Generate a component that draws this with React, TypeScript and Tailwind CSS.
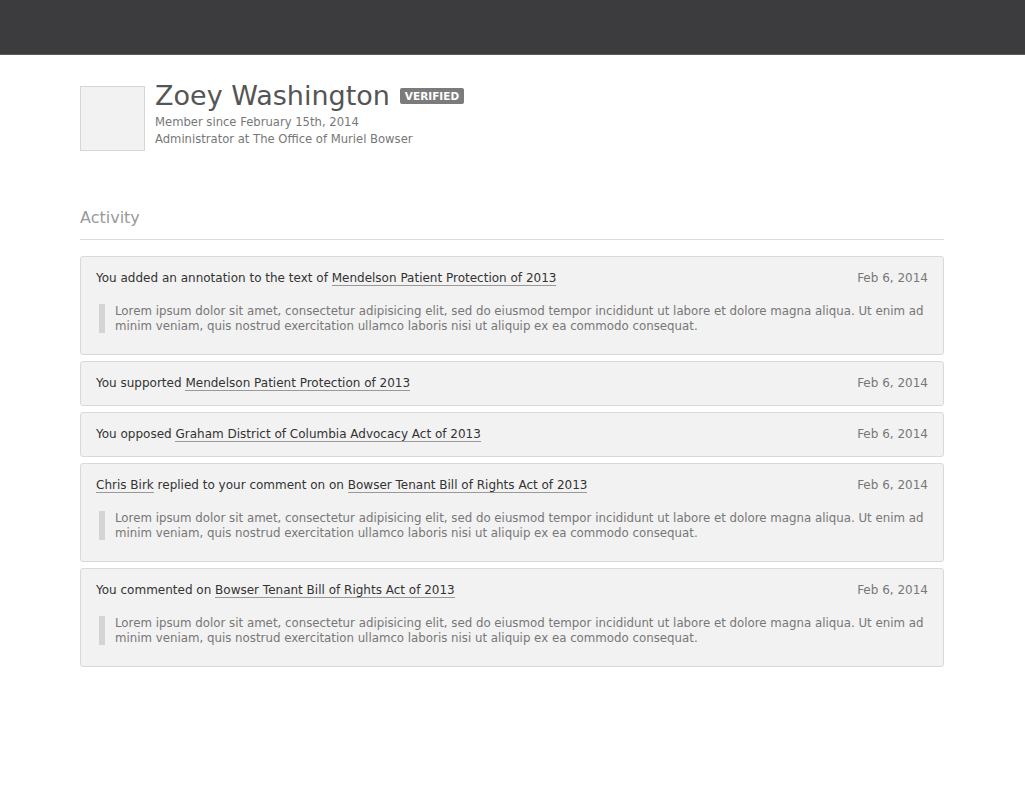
import React from 'react';

type Part = string | { link: string };

interface ActivityItem {
    parts: Part[];
    date: string;
    quote?: string;
}

const LOREM =
    'Lorem ipsum dolor sit amet, consectetur adipisicing elit, sed do eiusmod tempor incididunt ut labore et dolore magna aliqua. Ut enim ad minim veniam, quis nostrud exercitation ullamco laboris nisi ut aliquip ex ea commodo consequat.';

const items: ActivityItem[] = [
    {
        parts: ['You added an annotation to the text of ', { link: 'Mendelson Patient Protection of 2013' }],
        date: 'Feb 6, 2014',
        quote: LOREM,
    },
    {
        parts: ['You supported ', { link: 'Mendelson Patient Protection of 2013' }],
        date: 'Feb 6, 2014',
    },
    {
        parts: ['You opposed ', { link: 'Graham District of Columbia Advocacy Act of 2013' }],
        date: 'Feb 6, 2014',
    },
    {
        parts: [{ link: 'Chris Birk' }, ' replied to your comment on on ', { link: 'Bowser Tenant Bill of Rights Act of 2013' }],
        date: 'Feb 6, 2014',
        quote: LOREM,
    },
    {
        parts: ['You commented on ', { link: 'Bowser Tenant Bill of Rights Act of 2013' }],
        date: 'Feb 6, 2014',
        quote: LOREM,
    },
];

function ActivityCard({ item }: { item: ActivityItem }) {
    return (
        <div className="rounded-[3px] border border-[#d9d9d9] bg-[#f2f2f2] px-[15px] py-[13px]">
            <div className="flex items-center justify-between text-[12px] leading-[17px]">
                <p className="text-[#333]">
                    {item.parts.map((p, i) =>
                        typeof p === 'string' ? (
                            <span key={i}>{p}</span>
                        ) : (
                            <a key={i} href="#" className="border-b border-[#999] text-[#333]">
                                {p.link}
                            </a>
                        )
                    )}
                </p>
                <span className="text-[#777]">{item.date}</span>
            </div>
            {item.quote && (
                <blockquote className="mt-[17px] mb-[8px] ml-[3px] border-l-[6px] border-[#d4d4d4] pl-[10px] text-[11.8px] leading-[14.5px] text-[#777]">
                    {item.quote}
                </blockquote>
            )}
        </div>
    );
}

export default function App() {
    return (
        <div className="min-h-screen bg-white font-['DejaVu_Sans',sans-serif]">
            <header className="h-[55px] border-b border-[#5c5c5c] bg-[#3c3c3e]" />
            <main className="ml-[80px] w-[864px] pt-[31px]">
                <div className="flex items-start gap-[10px]">
                    <div className="h-[65px] w-[65px] border border-[#d6d6d6] bg-[#f2f2f2]" />
                    <div className="-mt-[7px]">
                        <div className="flex items-center gap-[10px]">
                            <h1 className="text-[27px] leading-[34px] text-[#555]">Zoey Washington</h1>
                            <span className="rounded-[2px] bg-[#7b7b7b] px-[5px] text-[10.5px] font-bold leading-[16px] text-white">
                                VERIFIED
                            </span>
                        </div>
                        <p className="mt-[1px] text-[11.6px] leading-[17px] text-[#777]">Member since February 15th, 2014</p>
                        <p className="text-[11.6px] leading-[17px] text-[#777]">Administrator at The Office of Muriel Bowser</p>
                    </div>
                </div>

                <h2 className="mt-[56px] border-b border-[#dcdcdc] pb-[10px] text-[16px] leading-[22px] text-[#999]">
                    Activity
                </h2>

                <div className="mt-[16px] flex flex-col gap-[6px]">
                    {items.map((item, i) => (
                        <ActivityCard key={i} item={item} />
                    ))}
                </div>
            </main>
        </div>
    );
}
